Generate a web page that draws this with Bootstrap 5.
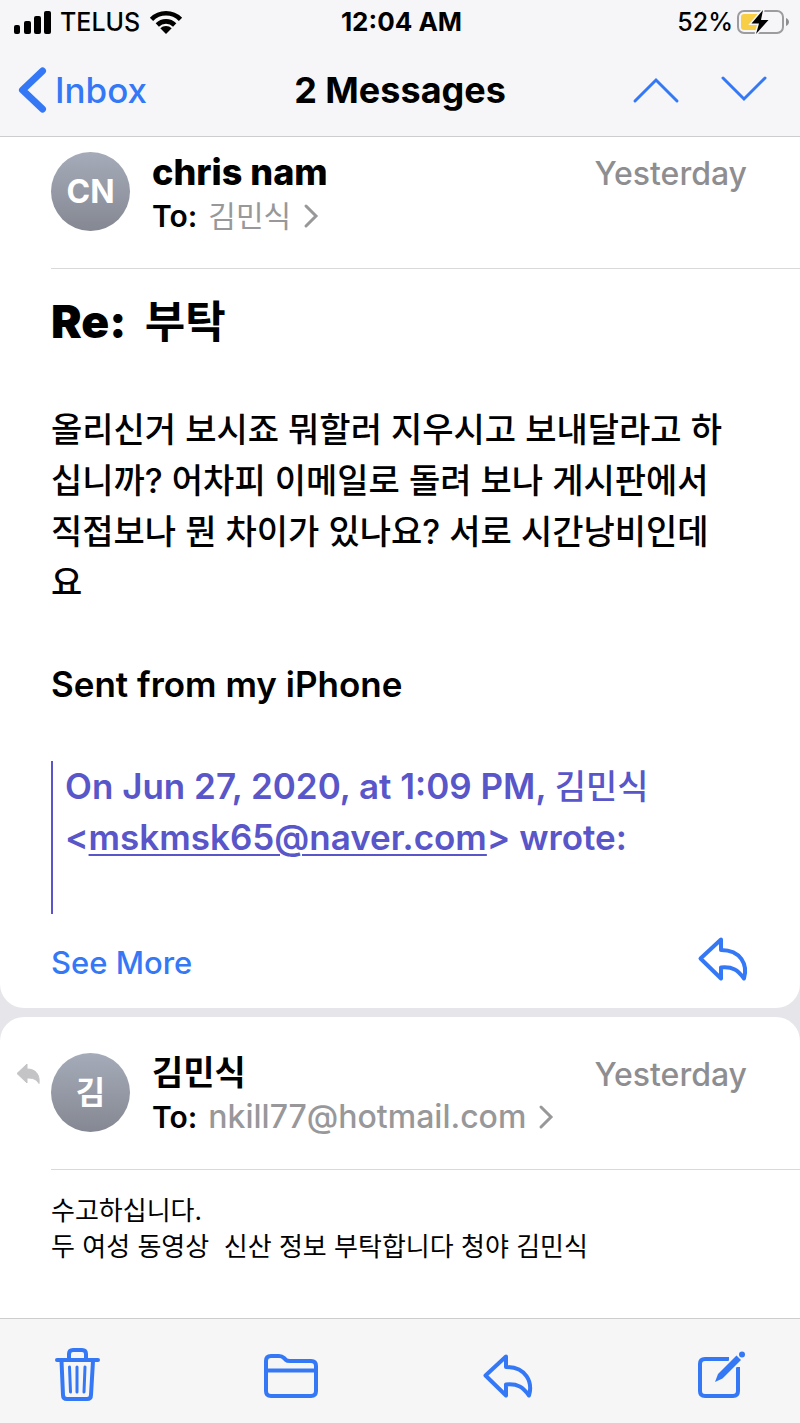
<!DOCTYPE html>
<html lang="en">
<head>
<meta charset="utf-8">
<meta name="viewport" content="width=device-width, initial-scale=1">
<title>2 Messages</title>
<link href="https://cdn.jsdelivr.net/npm/bootstrap@5.3.0/dist/css/bootstrap.min.css" rel="stylesheet">
<style>
  body { font-family: Inter, "Noto Sans CJK KR", sans-serif; color: #000; background: #e5e5ea; --accent: #3478f6; }
  svg { display: block; fill: none; flex: none; overflow: visible; }
  .topbar { background: #f6f6f8; border-bottom: 1px solid #cdcdcf; }
  .statusbar { height: 44px; font-size: 25px; line-height: 28px; padding: 0 11px 0 14px; font-weight: 500; }
  .clock { font-size: 26px; font-weight: 700; }
  .navrow { height: 92px; }
  .side { flex: 1 1 0; }
  .tap { border: 0; background: none; padding: 0; color: var(--accent); text-decoration: none; }
  .back { font-size: 35px; line-height: 44px; font-weight: 500; margin-left: 18px; vertical-align: middle; }
  .arrows { gap: 44px; }
  .arrows .tap:last-child { margin-right: 34px; }
  .title { font-size: 36px; line-height: 44px; font-weight: 700; }
  .sheet { background: #fff; padding-left: 51px; }
  .sheet-first { border-radius: 0 0 24px 24px; padding-bottom: 22px; }
  .sheet-next { border-radius: 24px 24px 0 0; margin-top: 9px; padding-top: 21px; }
  .msghead { padding: 15px 53px 28px 0; border-bottom: 1px solid #d9d9db; position: relative; }
  .avatar { width: 79px; height: 79px; border-radius: 50%; background: linear-gradient(#a5abb9, #858892); color: #fff; font-size: 32px; font-weight: 700; flex: none; }
  .who { padding-left: 22px; }
  .sender { font-size: 36px; line-height: 40px; font-weight: 800; }
  .sender-ko { font-size: 34px; font-weight: 700; }
  .rcpt { font-size: 30px; line-height: 48px; font-weight: 600; }
  .muted { color: #98989b; margin-left: 3px; }
  .muted:lang(ko) { font-weight: 400; }
  .addr { font-size: 32px; font-weight: 500; }
  .when { font-size: 32px; line-height: 44px; color: #8e8e91; font-weight: 500; }
  .replied { position: absolute; left: -35px; top: 25px; }
  .subject { font-size: 46px; line-height: 52px; font-weight: 900; margin: 26px 0 56px; }
  .subject span { font-size: 44px; font-weight: 700; }
  .mailtext { font-size: 35px; line-height: 51px; font-weight: 600; padding-right: 68px; }
  .ko { font-size: 34px; font-weight: 500; }
  .quote { border-left: 2px solid #5856c9; color: #5856c9; padding-left: 12px; margin: 0; font-size: 35px; }
  .quote a { color: inherit; text-underline-offset: 4px; text-decoration-thickness: 2px; }
  .actions { padding: 18px 52px 0 0; font-size: 31px; line-height: 46px; }
  .plain { font-size: 26px; line-height: 36px; padding: 23px 53px 48px 0; white-space: pre-wrap; }
  .toolbar { background: #f6f6f7; border-top: 1px solid #cdcdcf; height: 105px; padding: 10px 55px 0; }
</style>
</head>
<body class="d-flex flex-column min-vh-100">
<header class="topbar">
  <div class="statusbar d-flex align-items-center">
    <div class="side d-flex align-items-center">
      <svg width="38" height="23"><g fill="#000"><rect y="14" width="6" height="9" rx="2"/><rect x="10" y="10" width="7" height="13" rx="2"/><rect x="20" y="5" width="7" height="18" rx="2"/><rect x="30" width="7" height="23" rx="2"/></g></svg>
      <span class="ms-2 me-2">TELUS</span>
      <svg width="36" height="24" viewBox="0 0 36 24"><g stroke="#000" stroke-width="4.6"><path d="M3.5 9.3a20.500 20.500 0 0 1 29 0"/><path d="M9.300 15a12.300 12.300 0 0 1 17.400 0"/></g><path d="M12.300 18.300a8 8 0 0 1 11.400 0L18 24z" fill="#000"/></svg>
    </div>
    <div class="clock">12:04 AM</div>
    <div class="side d-flex align-items-center justify-content-end">
      <span class="me-1">52%</span>
      <svg width="52" height="26" viewBox="0 0 52 26"><rect x="1" y="2" width="45" height="22" rx="6" stroke="#9c9c9f" stroke-width="2"/><rect x="4" y="5" width="18" height="16" rx="3" fill="#f7ce46"/><path d="M49 9c4 2 4 6 0 8z" fill="#8e8e91"/><path d="M26 1L14.500 14.500h7.500L19 25 31.500 11h-7.500z" fill="#000" stroke="#f6f6f8" stroke-width="3" paint-order="stroke"/></svg>
    </div>
  </div>
  <nav class="navrow d-flex align-items-center">
    <div class="side"><a href="#" class="tap back d-inline-flex align-items-center gap-2"><svg width="29" height="46" viewBox="0 0 29 46"><path d="M24.500 4L4.500 23l20 19" stroke="#3478f6" stroke-width="7" stroke-linecap="round" stroke-linejoin="round"/></svg>Inbox</a></div>
    <h1 class="title m-0">2 Messages</h1>
    <div class="side arrows d-flex justify-content-end">
      <button class="tap" aria-label="Previous message"><svg width="44" height="26" viewBox="0 0 44 26"><path d="M1 24L22 3l21 21" stroke="#3478f6" stroke-width="3" stroke-linecap="round"/></svg></button>
      <button class="tap" aria-label="Next message"><svg width="44" height="26" viewBox="0 0 44 26"><path d="M1 1l21 21L43 1" stroke="#3478f6" stroke-width="3" stroke-linecap="round"/></svg></button>
    </div>
  </nav>
</header>
<main class="flex-grow-1 d-flex flex-column">
  <article class="sheet sheet-first">
    <div class="msghead d-flex">
      <div class="avatar d-flex align-items-center justify-content-center">CN</div>
      <div class="who flex-grow-1">
        <div class="sender">chris nam</div>
        <div class="rcpt d-flex align-items-center gap-2">To: <span class="muted" lang="ko">김민식</span><svg class="ms-1" width="16" height="24" viewBox="0 0 16 24"><path d="M3 2l10 10L3 22" stroke="#98989b" stroke-width="3" stroke-linecap="round"/></svg></div>
      </div>
      <time class="when">Yesterday</time>
    </div>
    <h2 class="subject">Re:&nbsp; <span lang="ko">부탁</span></h2>
    <div class="mailtext">
      <p class="ko m-0" lang="ko">올리신거 보시죠 뭐할러 지우시고 보내달라고 하십니까? 어차피 이메일로 돌려 보나 게시판에서 직접보나 뭔 차이가 있나요? 서로 시간낭비인데요</p>
      <br>
      <p class="m-0">Sent from my iPhone</p>
      <br>
      <blockquote class="quote">On Jun 27, 2020, at 1:09 PM, <span class="ko" lang="ko">김민식</span> &lt;<a href="#">mskmsk65@naver.com</a>&gt; wrote:<br><br></blockquote>
    </div>
    <div class="actions d-flex justify-content-between">
      <a href="#" class="tap fw-medium pt-2">See More</a>
      <button class="tap" aria-label="Reply"><svg width="50" height="44" viewBox="0 0 50 44"><path d="M23 2.500L2.500 21.500 23 41.500V30.500C35 29.500 40 33 46 41.500 50 28 43 13 23 13z" stroke="#3478f6" stroke-width="4" stroke-linejoin="round"/></svg></button>
    </div>
  </article>
  <article class="sheet sheet-next flex-grow-1">
    <div class="msghead d-flex">
      <svg class="replied" width="24" height="22" viewBox="0 0 24 22"><path d="M11 1L1 10.500 11 20v-5c6 0 9 1 12 5.500C24 12 20 6 11 6z" fill="#c4c4c6" stroke="#c4c4c6" stroke-linejoin="round"/></svg>
      <div class="avatar d-flex align-items-center justify-content-center" lang="ko">김</div>
      <div class="who flex-grow-1">
        <div class="sender sender-ko" lang="ko">김민식</div>
        <div class="rcpt d-flex align-items-center gap-2">To: <span class="muted addr">nkill77@hotmail.com</span><svg class="ms-1" width="16" height="24" viewBox="0 0 16 24"><path d="M3 2l10 10L3 22" stroke="#98989b" stroke-width="3" stroke-linecap="round"/></svg></div>
      </div>
      <time class="when">Yesterday</time>
    </div>
    <p class="plain m-0" lang="ko">수고하십니다.
두 여성 동영상  신산 정보 부탁합니다 청야 김민식</p>
  </article>
</main>
<footer class="toolbar d-flex align-items-center justify-content-between">
  <button class="tap" aria-label="Delete"><svg width="44" height="54" viewBox="0 0 44 54"><g stroke="#3478f6" stroke-width="4" stroke-linecap="round" stroke-linejoin="round"><path d="M2 11h41M14 10V5q0-4 4-4h9q4 0 4 4v5M6.500 12l1.500 34q0 4 4 4h20q4 0 4-4l2-34"/><path d="M14.500 18l1 25M22 18v25M30 18l-1 25" stroke-width="3"/></g></svg></button>
  <button class="tap" aria-label="Move to folder"><svg width="54" height="44" viewBox="0 0 54 44"><path d="M2 37V7q0-5 5-5h8q3 0 5 2l2 2q1 1 4 1h21q5 0 5 5v25q0 5-5 5H7q-5 0-5-5zM2 16.500h50" stroke="#3478f6" stroke-width="4"/></svg></button>
  <button class="tap" aria-label="Reply"><svg width="50" height="44" viewBox="0 0 50 44"><path d="M23 2.500L2.500 21.500 23 41.500V30.500C35 29.500 40 33 46 41.500 50 28 43 13 23 13z" stroke="#3478f6" stroke-width="4" stroke-linejoin="round"/></svg></button>
  <button class="tap" aria-label="Compose"><svg width="47" height="48" viewBox="0 0 47 48"><path d="M31 7H7q-5 0-5 5v27q0 5 5 5h28q5 0 5-5V15" stroke="#3478f6" stroke-width="4"/><path d="M17 30l3-8L38.500 3.500l4.500 4.500L24.500 26.500z" fill="#3478f6" stroke="#f6f6f7" stroke-width="4" paint-order="stroke"/><circle cx="44" cy="2.500" r="3" fill="#3478f6"/></svg></button>
</footer>
<script src="https://cdn.jsdelivr.net/npm/bootstrap@5.3.0/dist/js/bootstrap.bundle.min.js"></script>
</body>
</html>
